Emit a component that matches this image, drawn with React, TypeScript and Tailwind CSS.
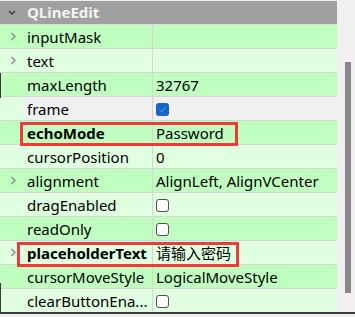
const rows = [
  { name: "inputMask", value: "", expand: true },
  { name: "text", value: "", expand: true },
  { name: "maxLength", value: "32767" },
  { name: "frame", check: "on", gray: true },
  { name: "echoMode", value: "Password", bold: true },
  { name: "cursorPosition", value: "0" },
  { name: "alignment", value: "AlignLeft, AlignVCenter", expand: true },
  { name: "dragEnabled", check: "off" },
  { name: "readOnly", check: "off" },
  { name: "placeholderText", value: "请输入密码", bold: true, expand: true },
  { name: "cursorMoveStyle", value: "LogicalMoveStyle" },
  { name: "clearButtonEna...", check: "off" },
];

function Chevron({ down }: { down?: boolean }) {
  return (
    <svg width="8" height="9" viewBox="0 0 8 9" className="block">
      {down ? (
        <polyline points="1,3 4,6 7,3" fill="none" stroke="#3c3c3c" strokeWidth="1.4" />
      ) : (
        <polyline points="2.5,1 6,4.5 2.5,8" fill="none" stroke="#8a8a8a" strokeWidth="1.3" />
      )}
    </svg>
  );
}

function Check({ on }: { on: boolean }) {
  if (on)
    return (
      <div className="flex h-[13px] w-[13px] items-center justify-center rounded-[3px] bg-[#1666c6]">
        <svg width="9" height="9" viewBox="0 0 9 9">
          <polyline points="1.5,4.8 3.6,6.8 7.5,2.2" fill="none" stroke="#6fa3e4" strokeWidth="1" />
        </svg>
      </div>
    );
  return <div className="h-[13px] w-[13px] rounded-[3px] border border-[#4f4f4f] bg-white" />;
}

export default function App() {
  return (
    <div
      className="relative h-[317px] w-[355px] overflow-hidden bg-[#f0f0f0] pt-px text-[15px] text-black"
      style={{ fontFamily: '"Noto Sans", "Noto Sans CJK SC", sans-serif' }}
    >
      <div className="flex">
        <div className="w-[337px]">
          <div className="flex h-[24px] items-center border-b border-[#dcdcdc] bg-[#a0a0a0]">
            <div className="flex w-[23px] justify-center pl-px">
              <Chevron down />
            </div>
            <span className="pl-[4px] font-bold leading-none text-[#f4f4f4]">QLineEdit</span>
          </div>
          {rows.map((r, i) => {
            const bg = i % 2 === 0 ? "bg-[#c0ffc0]" : "bg-[#e0ffe0]";
            return (
              <div key={r.name} className={`flex h-[24px] border-b border-[#d6d6d6] ${bg}`}>
                <div className="flex w-[23px] items-center justify-center pl-[2px]">
                  {r.expand && <Chevron />}
                </div>
                <div
                  className={`flex w-[130px] items-center border-r border-[#d6d6d6] pl-[4px] pt-px leading-none ${
                    r.gray ? "bg-[#f0f0f0]" : ""
                  } ${r.bold ? "font-bold" : ""}`}
                >
                  <span className="whitespace-nowrap">{r.name}</span>
                </div>
                <div className={`flex flex-1 items-center pl-[3px] pt-px leading-none ${r.gray ? "bg-[#f0f0f0]" : ""}`}>
                  {r.check ? <Check on={r.check === "on"} /> : <span className="whitespace-nowrap">{r.value}</span>}
                </div>
              </div>
            );
          })}
        </div>
        <div className="w-[18px] pl-[8px] pt-[61px]">
          <div className="h-[231px] w-[6px] bg-[#888888]" />
        </div>
      </div>
      <div className="absolute left-0 top-[312px] h-[2px] w-full bg-[#3a3a3a]" />
      <div className="absolute left-0 top-[283px] h-[30px] w-px bg-[#3a3a3a]" />
      <div className="absolute left-0 top-[73px] h-[25px] w-px bg-[#3a3a3a]" />
      <div className="absolute left-[20px] top-[122px] h-[24px] w-[218px] border-[3px] border-[#f03a3a]" />
      <div className="absolute left-[17px] top-[242px] h-[25px] w-[222px] border-[3px] border-[#f03a3a]" />
    </div>
  );
}
